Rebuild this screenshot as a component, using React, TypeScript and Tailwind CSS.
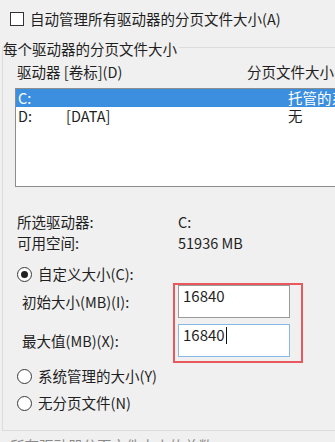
import React from "react";

// 单选按钮
const Radio: React.FC<{ checked?: boolean; label: string; className?: string }> = ({
  checked,
  label,
  className,
}) => (
  <div className={`flex h-[18px] items-center pl-[14px] ${className ?? ""}`}>
    <span className="flex h-[15px] w-[15px] items-center justify-center rounded-full border border-[#3a3a3a] bg-white">
      {checked && <span className="h-[7px] w-[7px] rounded-full bg-[#222]" />}
    </span>
    <span className="ml-[6px] whitespace-nowrap">{label}</span>
  </div>
);

const App: React.FC = () => {
  return (
    <div className="h-[442px] w-[335px] overflow-hidden bg-[#f0f0f0] font-['Microsoft_YaHei','Noto_Sans_CJK_SC',sans-serif] text-[14.5px] leading-[18px] text-[#1f1f1f]">
      {/* 自动管理 */}
      <div className="flex h-[28px] items-center pl-[10px] pt-[10px]">
        <span className="h-[14px] w-[14px] border border-[#333] bg-white" />
        <span className="ml-[6px] whitespace-nowrap">自动管理所有驱动器的分页文件大小(A)</span>
      </div>

      {/* 每个驱动器的分页文件大小 */}
      <div className="ml-[2px] mt-[19px] h-[384px] w-[400px] border border-[#dcdcdc]">
        <div className="-mt-[8px] flex h-[18px]">
          <span className="whitespace-nowrap bg-[#f0f0f0] pr-[2px]">每个驱动器的分页文件大小</span>
        </div>

        <div className="mt-[5px] flex h-[18px] whitespace-nowrap pl-[14px]">
          <span className="w-[230px]">驱动器 [卷标](D)</span>
          <span>分页文件大小(MB)</span>
        </div>

        <div className="ml-[12px] mt-[7px] h-[99px] w-[380px] border border-[#8d8d8d] bg-white">
          <div className="flex h-[18px] whitespace-nowrap bg-[#3c8fdf] pl-[2px] text-white">
            <span className="w-[48px]">C:</span>
            <span className="w-[222px]"></span>
            <span>托管的系统</span>
          </div>
          <div className="flex h-[18px] whitespace-nowrap pl-[2px]">
            <span className="w-[48px]">D:</span>
            <span className="w-[222px]">[DATA]</span>
            <span>无</span>
          </div>
        </div>

        <div className="mt-[26px] flex whitespace-nowrap pl-[14px]">
          <span className="w-[161px]">所选驱动器:</span>
          <span>C:</span>
        </div>
        <div className="mt-[3px] flex whitespace-nowrap pl-[14px]">
          <span className="w-[161px]">可用空间:</span>
          <span>51936 MB</span>
        </div>

        <Radio checked label="自定义大小(C):" className="mt-[13px]" />

        <div className="flex">
          <div className="flex w-[170px] flex-col gap-[6px] pl-[19px] pt-[2px]">
            <div className="flex h-[33px] items-center whitespace-nowrap">初始大小(MB)(I):</div>
            <div className="flex h-[33px] items-center whitespace-nowrap">最大值(MB)(X):</div>
          </div>
          <div className="flex flex-col gap-[6px] border-2 border-[#e8585c] pb-[4px] pl-[3px] pr-[11px]">
            <div className="h-[33px] w-[112px] border border-[#9a9a9a] bg-white px-[4px] pt-[1px] text-[15px]">
              16840
            </div>
            <div className="flex h-[33px] w-[112px] items-start border border-[#86b8ea] bg-white px-[4px] pt-[1px] text-[15px]">
              16840
              <span className="ml-[1px] mt-[1px] h-[17px] w-[1px] bg-[#111]" />
            </div>
          </div>
        </div>

        <Radio label="系统管理的大小(Y)" className="mt-[4px]" />
        <Radio label="无分页文件(N)" className="mt-[9px]" />
      </div>

      <div className="mt-[6px] whitespace-nowrap pl-[10px] text-[#8a8a8a]">所有驱动器分页文件大小的总数</div>
    </div>
  );
};

export default App;
